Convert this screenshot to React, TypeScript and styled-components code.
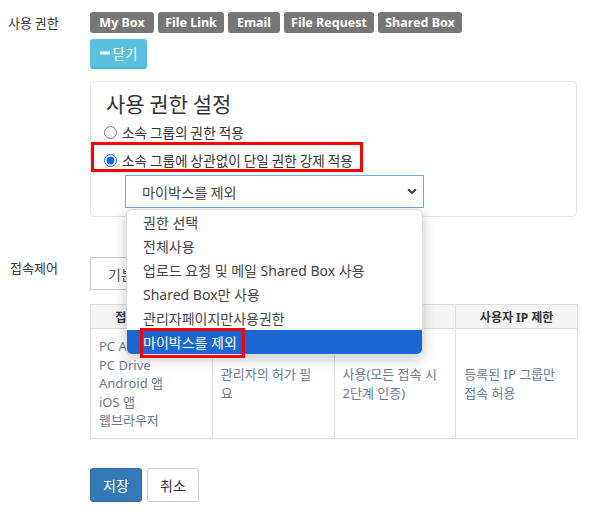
import React, { useState } from "react";
import styled, { createGlobalStyle } from "styled-components";

const GlobalStyle = createGlobalStyle`
  html, body {
    margin: 0;
    padding: 0;
    background: #fff;
  }
  body {
    font-family: "Noto Sans", "Noto Sans CJK KR", sans-serif;
    color: #333;
  }
  * {
    box-sizing: border-box;
  }
`;

const permissionTabs = [
  { label: "My Box", width: 64 },
  { label: "File Link", width: 66 },
  { label: "Email", width: 52 },
  { label: "File Request", width: 90 },
  { label: "Shared Box", width: 84 },
];

const options = [
  "권한 선택",
  "전체사용",
  "업로드 요청 및 메일 Shared Box 사용",
  "Shared Box만 사용",
  "관리자페이지만사용권한",
  "마이박스를 제외",
];

export default function App() {
  const [mode, setMode] = useState("force");
  const [selected, setSelected] = useState("마이박스를 제외");

  return (
    <>
      <GlobalStyle />
      <Page>
        {/* 사용 권한 */}
        <FormRow>
          <RowLabel>사용 권한</RowLabel>
          <Field>
            <TabRow>
              {permissionTabs.map((t) => (
                <TabButton key={t.label} $w={t.width}>
                  {t.label}
                </TabButton>
              ))}
            </TabRow>
            <CloseButton>
              <svg width="10" height="10" viewBox="0 0 10 10">
                <rect x="0" y="3.5" width="10" height="3" fill="#fff" />
              </svg>
              닫기
            </CloseButton>

            <Panel>
              <PanelTitle>사용 권한 설정</PanelTitle>
              <RadioRow>
                <input
                  type="radio"
                  name="perm"
                  checked={mode === "group"}
                  onChange={() => setMode("group")}
                />
                소속 그룹의 권한 적용
              </RadioRow>
              <RadioRow $marked>
                <input
                  type="radio"
                  name="perm"
                  checked={mode === "force"}
                  onChange={() => setMode("force")}
                />
                소속 그룹에 상관없이 단일 권한 강제 적용
              </RadioRow>
              <SelectWrap>
                <SelectBox>
                  <span>{selected}</span>
                  <svg width="10" height="7" viewBox="0 0 10 7">
                    <path
                      d="M1.2 1.2 L5 5 L8.8 1.2"
                      fill="none"
                      stroke="#444"
                      strokeWidth="2.2"
                    />
                  </svg>
                </SelectBox>
                <OptionList>
                  {options.map((o) => (
                    <OptionItem
                      key={o}
                      $active={o === selected}
                      onClick={() => setSelected(o)}
                    >
                      <OptionText $marked={o === selected}>{o}</OptionText>
                    </OptionItem>
                  ))}
                </OptionList>
              </SelectWrap>
            </Panel>
          </Field>
        </FormRow>

        {/* 접속제어 */}
        <FormRow $top={40}>
          <RowLabel $indent={2}>접속제어</RowLabel>
          <Field>
            <ModeBox>기본 설정</ModeBox>
            <AccessTable>
              <thead>
                <tr>
                  <Th>접속 허용 장치</Th>
                  <Th>승인</Th>
                  <Th>인증</Th>
                  <Th>사용자 IP 제한</Th>
                </tr>
              </thead>
              <tbody>
                <tr>
                  <Td>
                    PC App
                    <br />
                    PC Drive
                    <br />
                    Android 앱
                    <br />
                    iOS 앱
                    <br />
                    웹브라우저
                  </Td>
                  <Td>관리자의 허가 필요</Td>
                  <Td>사용(모든 접속 시 2단계 인증)</Td>
                  <Td>등록된 IP 그룹만 접속 허용</Td>
                </tr>
              </tbody>
            </AccessTable>
          </Field>
        </FormRow>

        <FormRow $top={29}>
          <RowLabel />
          <Field>
            <Actions>
              <SaveButton>저장</SaveButton>
              <CancelButton>취소</CancelButton>
            </Actions>
          </Field>
        </FormRow>
      </Page>
    </>
  );
}

const Page = styled.div`
  padding: 12px 0 30px 8px;
  width: 612px;
`;

const FormRow = styled.div<{ $top?: number }>`
  display: flex;
  align-items: flex-start;
  margin-top: ${({ $top }) => $top || 0}px;
`;

const RowLabel = styled.div<{ $indent?: number }>`
  width: 82px;
  flex-shrink: 0;
  padding-left: ${({ $indent }) => $indent || 0}px;
  font-family: "Noto Sans CJK KR", sans-serif;
  font-size: 13px;
  line-height: 21px;
  color: #333;
`;

const Field = styled.div`
  width: 488px;
  display: flex;
  flex-direction: column;
  align-items: flex-start;
`;

const TabRow = styled.div`
  display: flex;
  gap: 4px;
`;

const TabButton = styled.button<{ $w: number }>`
  width: ${({ $w }) => $w}px;
  height: 21px;
  padding: 0;
  border: none;
  border-radius: 3px;
  background: #777;
  color: #fff;
  font-family: "Noto Sans", "Noto Sans CJK KR", sans-serif;
  font-size: 12.5px;
  font-weight: 700;
  line-height: 21px;
  white-space: nowrap;
  cursor: pointer;
`;

const CloseButton = styled.button`
  margin-top: 6px;
  height: 30px;
  width: 57px;
  display: flex;
  align-items: center;
  justify-content: center;
  gap: 3px;
  border: none;
  border-bottom: 2px solid #46b8da;
  border-radius: 3px;
  background: #5bc0de;
  color: #fff;
  font-family: "Noto Sans CJK KR", sans-serif;
  font-size: 13.5px;
  cursor: pointer;
`;

const Panel = styled.div`
  position: relative;
  margin-top: 12px;
  width: 487px;
  height: 136px;
  padding: 8px 15px 0;
  border: 1px solid #e3e3e3;
  border-radius: 4px;
  background: #fff;
`;

const PanelTitle = styled.h2`
  margin: 0 0 6px;
  font-family: "Noto Sans CJK KR", sans-serif;
  font-size: 21px;
  font-weight: 400;
  line-height: 26px;
  color: #333;
`;

const RadioRow = styled.label<{ $marked?: boolean }>`
  position: relative;
  display: flex;
  width: fit-content;
  align-items: center;
  gap: 5px;
  height: 20px;
  margin-top: ${({ $marked }) => ($marked ? 8 : 0)}px;
  margin-left: -2px;
  font-family: "Noto Sans CJK KR", sans-serif;
  font-size: 13.6px;
  color: #333;
  cursor: pointer;

  input {
    margin: 0;
    width: 13px;
    height: 13px;
    accent-color: #0b6cf0;
  }

  &::after {
    content: "";
    display: ${({ $marked }) => ($marked ? "block" : "none")};
    position: absolute;
    top: -8px;
    bottom: -2px;
    left: -13px;
    right: -10px;
    border: 3px solid #f00;
    pointer-events: none;
  }
`;

const SelectWrap = styled.div`
  position: relative;
  margin: 5px 0 0 19px;
  width: 299px;
  z-index: 5;
`;

const SelectBox = styled.div`
  height: 33px;
  display: flex;
  align-items: center;
  justify-content: space-between;
  padding: 0 6px 0 16px;
  border: 1px solid #66afe9;
  background: #fff;
  font-family: "Noto Sans CJK KR", sans-serif;
  font-size: 14.2px;
  color: #444;
`;

const OptionList = styled.ul`
  position: absolute;
  top: calc(100% + 1px);
  left: 1px;
  right: 1px;
  margin: 0;
  padding: 0;
  list-style: none;
  background: #fff;
  border: 1px solid #dcdcdc;
  border-radius: 6px;
  box-shadow: 0 4px 14px rgba(0, 0, 0, 0.22);
`;

const OptionItem = styled.li<{ $active?: boolean }>`
  height: 24px;
  display: flex;
  align-items: center;
  padding-left: 16px;
  font-family: "Noto Sans", "Noto Sans CJK KR", sans-serif;
  font-size: 14px;
  white-space: nowrap;
  color: ${({ $active }) => ($active ? "#fff" : "#444")};
  background: ${({ $active }) => ($active ? "#1a67d3" : "transparent")};
  border-radius: ${({ $active }) => ($active ? "0 0 5px 5px" : "0")};
  cursor: default;
`;

const OptionText = styled.span<{ $marked?: boolean }>`
  position: relative;

  &::after {
    content: "";
    display: ${({ $marked }) => ($marked ? "block" : "none")};
    position: absolute;
    top: -4px;
    bottom: -6px;
    left: -3px;
    right: -8px;
    border: 3px solid #f00;
  }
`;

const ModeBox = styled.div`
  height: 33px;
  width: 140px;
  display: flex;
  align-items: center;
  padding-left: 17px;
  border: 1px solid #ccc;
  font-family: "Noto Sans CJK KR", sans-serif;
  font-size: 14px;
  color: #555;
`;

const AccessTable = styled.table`
  margin-top: 14px;
  width: 488px;
  border-collapse: collapse;
  table-layout: fixed;
`;

const Th = styled.th`
  height: 24px;
  padding: 0 8px;
  border: 1px solid #ddd;
  background: #f5f5f5;
  font-family: "Noto Sans", "Noto Sans CJK KR", sans-serif;
  font-size: 12px;
  font-weight: 700;
  color: #333;
  text-align: center;
`;

const Td = styled.td`
  height: 110px;
  padding: 8px 12px 8px 8px;
  border: 1px solid #ddd;
  vertical-align: middle;
  font-family: "Noto Sans", "Noto Sans CJK KR", sans-serif;
  font-size: 13px;
  line-height: 18.4px;
  color: #6a7a90;
`;

const Actions = styled.div`
  display: flex;
  gap: 5px;
`;

const SaveButton = styled.button`
  height: 34px;
  width: 52px;
  border: 1px solid #2e6da4;
  border-radius: 3px;
  background: #337ab7;
  color: #fff;
  font-family: "Noto Sans CJK KR", sans-serif;
  font-size: 14px;
  cursor: pointer;
`;

const CancelButton = styled.button`
  height: 34px;
  width: 52px;
  border: 1px solid #ccc;
  border-radius: 3px;
  background: #fff;
  color: #333;
  font-family: "Noto Sans CJK KR", sans-serif;
  font-size: 14px;
  cursor: pointer;
`;
